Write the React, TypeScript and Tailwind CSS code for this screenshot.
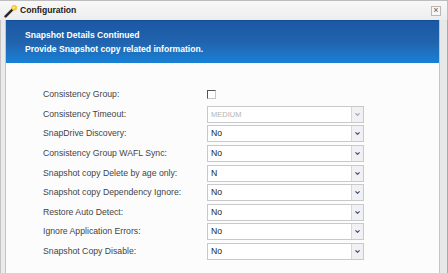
import { ChevronDown } from 'lucide-react';

const rows: { label: string; value?: string; disabled?: boolean; checkbox?: boolean }[] = [
  { label: 'Consistency Group:', checkbox: true },
  { label: 'Consistency Timeout:', value: 'MEDIUM', disabled: true },
  { label: 'SnapDrive Discovery:', value: 'No' },
  { label: 'Consistency Group WAFL Sync:', value: 'No' },
  { label: 'Snapshot copy Delete by age only:', value: 'N' },
  { label: 'Snapshot copy Dependency Ignore:', value: 'No' },
  { label: 'Restore Auto Detect:', value: 'No' },
  { label: 'Ignore Application Errors:', value: 'No' },
  { label: 'Snapshot Copy Disable:', value: 'No' },
];

function Select({ value, disabled }: { value: string; disabled?: boolean }) {
  return (
    <div className="flex h-[17px] w-[157px] border border-[#c9c9cc] bg-white">
      <div
        className={`flex flex-1 items-center pl-[3px] ${
          disabled ? 'text-[7.5px] text-[#b4b4b4]' : 'text-[8.7px] text-[#1e1e1e]'
        }`}>
        {value}
      </div>
      <div className="flex w-[12px] items-center justify-center border-l border-[#d6d6da] bg-[#f1f1f3]">
        <ChevronDown
          className={`h-[7px] w-[7px] ${disabled ? 'text-[#9aa6c2]' : 'text-[#3d4f7c]'}`}
          strokeWidth={4}
        />
      </div>
    </div>
  );
}

function WandIcon() {
  return (
    <svg width="14" height="14" viewBox="0 0 13 13">
      <line x1="1.5" y1="11.5" x2="8" y2="5" stroke="#2a2a2a" strokeWidth="2.4" strokeLinecap="round" />
      <circle cx="9.5" cy="3.5" r="2.6" fill="#f2c530" />
      <circle cx="9.2" cy="3.2" r="1.2" fill="#fbe88a" />
    </svg>
  );
}

export default function App() {
  return (
    <div
      className="flex h-[273px] w-[448px] flex-col overflow-hidden bg-[#ededed]"
      style={{ fontFamily: '"Liberation Sans", Arial, sans-serif' }}>
      {/* title bar */}
      <div className="flex h-[20px] items-center border-t border-r border-[#bdbdbd] bg-gradient-to-b from-[#f9f8f9] to-[#eeedee] pl-[4px] pr-[6px]">
        <WandIcon />
        <span className="ml-[2px] text-[8.6px] font-bold text-[#1a1a1a]">Configuration</span>
        <div className="ml-auto flex h-[10px] w-[10px] items-center justify-center border border-[#b8b8b8] bg-[#f7f7f7] text-[9px] leading-none text-[#555]">
          ×
        </div>
      </div>

      <div className="flex flex-1">
        {/* left frame */}
        <div className="w-[6px] border-l border-r border-[#c4c4c4] bg-[#ebebeb]" />

        <div className="flex flex-1 flex-col bg-[#fcfcfc]">
          {/* blue header */}
          <div className="flex h-[43px] flex-col justify-center gap-[1px] border-t border-[#134f98] bg-gradient-to-b from-[#1b58a5] via-[#2163ad] to-[#1781d6] pl-[19px] text-[8.6px] font-bold text-white">
            <div>Snapshot Details Continued</div>
            <div>Provide Snapshot copy related information.</div>
          </div>

          {/* form */}
          <div className="flex flex-col pt-[22px] pl-[37px]">
            {rows.map(row => (
              <div key={row.label} className="flex h-[19.6px] items-center">
                <div className="w-[164px] text-[8.7px] text-[#444]">{row.label}</div>
                {row.checkbox ? (
                  <div className="h-[9px] w-[9px] border border-t-[#555] border-l-[#555] border-r-[#c8c8c8] border-b-[#c8c8c8] bg-white" />
                ) : (
                  <Select value={row.value ?? ''} disabled={row.disabled} />
                )}
              </div>
            ))}
          </div>
        </div>

        {/* right frame */}
        <div className="w-[9px] border-l border-r border-l-[#c6c6c6] border-r-[#a8a8a8] bg-[#e8e8e8]" />
      </div>
    </div>
  );
}
